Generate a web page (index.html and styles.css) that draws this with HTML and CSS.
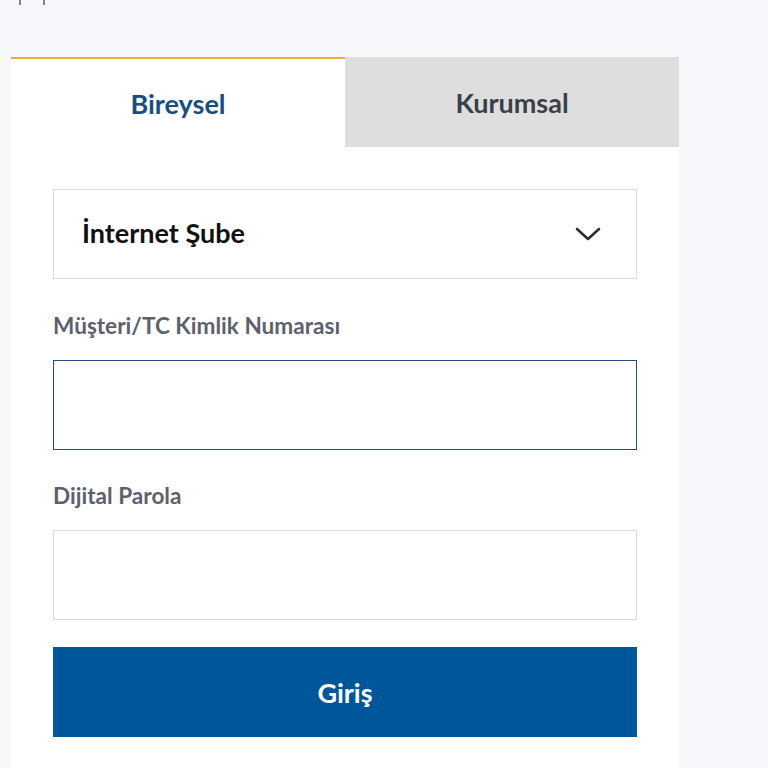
FILE: index.html
```html
<!DOCTYPE html>
<html lang="tr">
<head>
<meta charset="utf-8">
<link rel="stylesheet" href="styles.css">
</head>
<body>
<div class="top">
  <span class="mark"></span>
  <span class="mark"></span>
</div>
<div class="card">
  <div class="tabs">
    <div class="tab active">Bireysel</div>
    <div class="tab">Kurumsal</div>
  </div>
  <div class="form">
    <div class="select">
      <span>İnternet Şube</span>
      <svg class="chev" width="26" height="16" viewBox="0 0 26 16"><path d="M2 3 L13 13 L24 3" fill="none" stroke="#2b2f36" stroke-width="2.6" stroke-linecap="round" stroke-linejoin="round"/></svg>
    </div>
    <label class="label">Müşteri/TC Kimlik Numarası</label>
    <div class="input focus"></div>
    <label class="label second">Dijital Parola</label>
    <div class="input"></div>
    <div class="btn">Giriş</div>
  </div>
</div>
</body>
</html>
```
FILE: styles.css
```css
html, body {
  margin: 0;
  padding: 0;
  background: #f6f8fb;
  font-family: "Lato", "Noto Sans", sans-serif;
}
.top {
  height: 57px;
  display: flex;
  gap: 22px;
  padding-left: 19px;
}
.mark {
  width: 2px;
  height: 5px;
  background: #7b8596;
}
.card {
  margin-left: 11px;
  width: 668px;
  background: #fff;
  height: 711px;
}
.tabs {
  display: flex;
  height: 90px;
}
.tab {
  flex: 1;
  display: flex;
  align-items: center;
  justify-content: center;
  font-size: 27px;
  font-weight: 700;
  color: #3a3f48;
  background: #dedede;
  box-sizing: border-box;
  padding-top: 0;
}
.tab.active {
  background: #fff;
  color: #174f82;
  border-top: 2px solid #f0a742;
  padding-top: 0;
}
.form {
  padding: 42px 42px 0 42px;
  display: flex;
  flex-direction: column;
}
.select {
  height: 90px;
  box-sizing: border-box;
  border: 1px solid #dadada;
  display: flex;
  align-items: center;
  justify-content: space-between;
  padding: 0 35px 0 28px;
  font-size: 27px;
  font-weight: 700;
  color: #111;
}
.select span {
  margin-top: -4px;
}
.chev {
  display: block;
}
.label {
  margin-top: 35px;
  font-size: 22.6px;
  font-weight: 700;
  color: #5d616b;
  line-height: 24px;
}
.label.second {
  margin-top: 34px;
}
.input {
  margin-top: 22px;
  height: 90px;
  box-sizing: border-box;
  border: 1px solid #d9d9d9;
}
.input.focus {
  border-color: #1f4f7d;
}
.btn {
  margin-top: 27px;
  height: 90px;
  background: #00569a;
  color: #fff;
  display: flex;
  align-items: center;
  justify-content: center;
  font-size: 27px;
  font-weight: 700;
}
```
